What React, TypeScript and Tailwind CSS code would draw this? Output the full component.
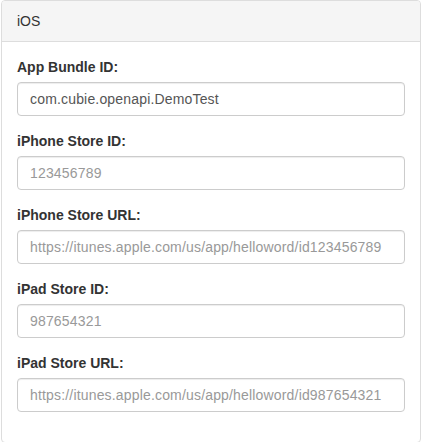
import React from "react";

type Field = {
  label: string;
  value?: string;
  placeholder?: string;
};

const fields: Field[] = [
  { label: "App Bundle ID:", value: "com.cubie.openapi.DemoTest" },
  { label: "iPhone Store ID:", placeholder: "123456789" },
  {
    label: "iPhone Store URL:",
    placeholder: "https://itunes.apple.com/us/app/helloword/id123456789",
  },
  { label: "iPad Store ID:", placeholder: "987654321" },
  {
    label: "iPad Store URL:",
    placeholder: "https://itunes.apple.com/us/app/helloword/id987654321",
  },
];

export default function App() {
  return (
    <div className="bg-white h-[442px] overflow-hidden font-['Liberation_Sans',Arial,sans-serif] text-[14px] text-[#333]">
      <div className="ml-px w-[420px] border border-[#ddd] rounded-[4px] bg-white">
        <div className="bg-[#f5f5f5] border-b border-[#ddd] rounded-t-[3px] px-[15px] py-[10px] leading-[20px]">
          iOS
        </div>
        <div className="p-[15px]">
          {fields.map((f) => (
            <div key={f.label} className="mb-[15px]">
              <label className="block mb-[5px] font-bold leading-[20px]">
                {f.label}
              </label>
              <input
                type="text"
                defaultValue={f.value}
                placeholder={f.placeholder}
                className="block w-full h-[34px] px-[12px] py-[6px] text-[14px] leading-[20px] tracking-[0.17px] text-[#555] bg-white border border-[#ccc] rounded-[4px] shadow-[inset_0_1px_1px_rgba(0,0,0,0.075)] placeholder:text-[#999] outline-none"
              />
            </div>
          ))}
        </div>
      </div>
    </div>
  );
}
